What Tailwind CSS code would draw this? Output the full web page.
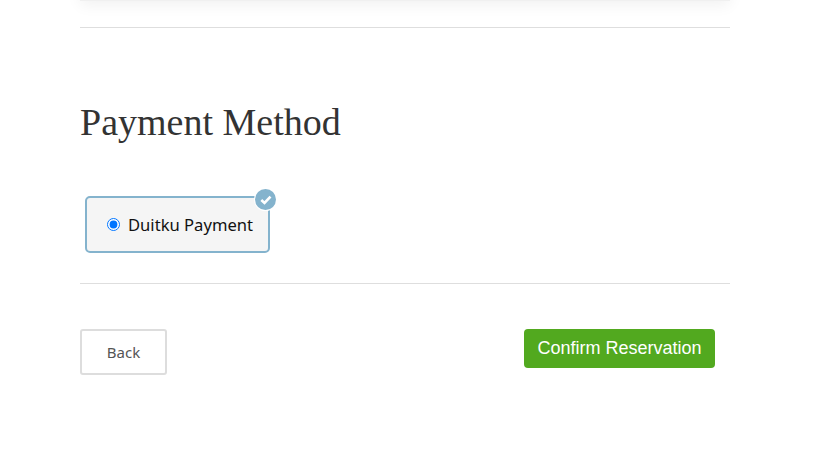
<!DOCTYPE html>
<html lang="en">
<head>
  <meta charset="UTF-8" />
  <title>Payment Method</title>
  <script src="https://cdn.jsdelivr.net/npm/@tailwindcss/browser@4"></script>
</head>
<body class="bg-white overflow-hidden font-['Noto_Sans',sans-serif]">
  <main class="w-[650px] ml-[80px] h-[459px]">
    <!-- bottom edge of the card above -->
    <div class="h-[20px] -mt-[19px] bg-white border-b border-[#f0f0f0] shadow-[0_4px_15px_rgba(0,0,0,0.06)]"></div>
    <hr class="mt-[26px] border-0 h-px bg-[#dedede]" />

    <h2 class="mt-[72px] h-[44px] text-[38px] leading-[44px] font-normal text-[#333333] font-['Liberation_Serif',serif]">Payment Method</h2>

    <div class="mt-[52px] ml-[5px] relative w-[185px] h-[57px] flex items-center pl-[20px] gap-[8px] bg-[#f5f5f5] border-2 border-[#84b3cd] rounded-[5px]">
      <input type="radio" checked class="w-[13px] h-[13px] m-0" />
      <span class="mt-[2px] text-[16.6px] text-[#111111]">Duitku Payment</span>
      <span class="absolute -top-[9px] -right-[8px] w-[21px] h-[21px] rounded-full bg-[#84b3cd] shadow-[0_0_0_1px_#ffffff] flex items-center justify-center">
        <svg width="12" height="10" viewBox="0 0 12 10" fill="none" stroke="#ffffff" stroke-width="2.6"><path d="M1.3 5l3.2 3 6-6.4" /></svg>
      </span>
    </div>

    <hr class="mt-[30px] border-0 h-px bg-[#dedede]" />

    <div class="mt-[45px] flex justify-between items-start pr-[15px]">
      <button class="w-[87px] h-[46px] bg-white border-2 border-[#dddddd] rounded-[3px] text-[15px] text-[#555555]">Back</button>
      <button class="w-[191px] h-[39px] bg-[#52a91f] rounded-[4px] text-[18px] text-white font-['Liberation_Sans',sans-serif]">Confirm Reservation</button>
    </div>
  </main>
</body>
</html>
